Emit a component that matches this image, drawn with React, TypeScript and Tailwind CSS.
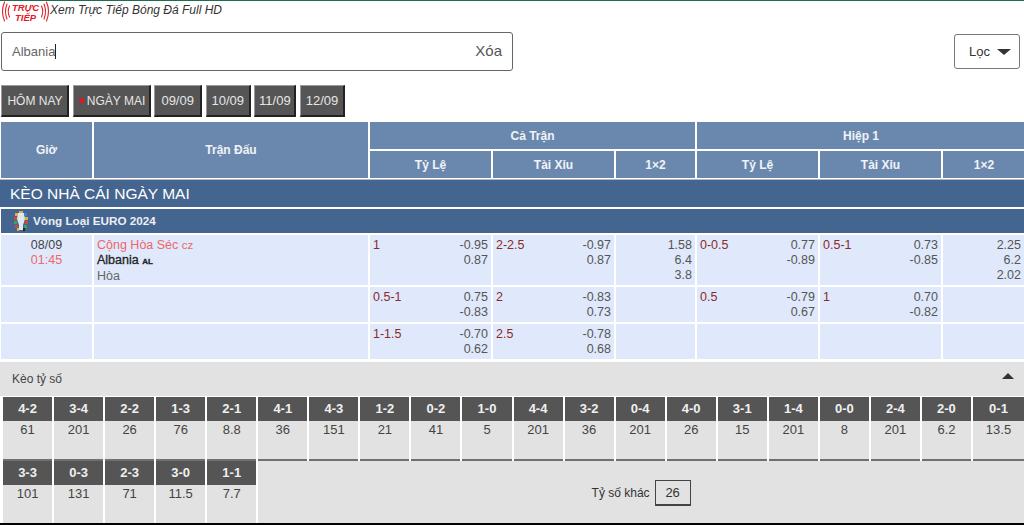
import React from "react";

const font = "font-['Liberation_Sans',Arial,sans-serif]";

const days = [
  { t: "09/09", w: "w-[48px]" },
  { t: "10/09", w: "w-[45px]" },
  { t: "11/09", w: "w-[42px]" },
  { t: "12/09", w: "w-[45px]" },
];

const oddsRows = [
  {
    time: ["08/09", "01:45"],
    h: "h-[50px]",
    cells: [
      { k: "1", v: ["-0.95", "0.87"] },
      { k: "2-2.5", v: ["-0.97", "0.87"] },
      { v: ["1.58", "6.4", "3.8"] },
      { k: "0-0.5", v: ["0.77", "-0.89"] },
      { k: "0.5-1", v: ["0.73", "-0.85"] },
      { v: ["2.25", "6.2", "2.02"] },
    ],
  },
  {
    h: "h-[35px]",
    cells: [
      { k: "0.5-1", v: ["0.75", "-0.83"] },
      { k: "2", v: ["-0.83", "0.73"] },
      { v: [] },
      { k: "0.5", v: ["-0.79", "0.67"] },
      { k: "1", v: ["0.70", "-0.82"] },
      { v: [] },
    ],
  },
  {
    h: "h-[35px]",
    cells: [
      { k: "1-1.5", v: ["-0.70", "0.62"] },
      { k: "2.5", v: ["-0.78", "0.68"] },
      { v: [] },
      { v: [] },
      { v: [] },
      { v: [] },
    ],
  },
];

const scores = [
  ["4-2", "61"], ["3-4", "201"], ["2-2", "26"], ["1-3", "76"], ["2-1", "8.8"],
  ["4-1", "36"], ["4-3", "151"], ["1-2", "21"], ["0-2", "41"], ["1-0", "5"],
  ["4-4", "201"], ["3-2", "36"], ["0-4", "201"], ["4-0", "26"], ["3-1", "15"],
  ["1-4", "201"], ["0-0", "8"], ["2-4", "201"], ["2-0", "6.2"], ["0-1", "13.5"],
];
const scores2 = [["3-3", "101"], ["0-3", "131"], ["2-3", "71"], ["3-0", "11.5"], ["1-1", "7.7"]];

const cols = "grid grid-cols-[91px_274px_121px_121px_79px_121px_121px_82px] gap-x-[2px] pl-[1px]";

function Logo() {
  return (
    <div className="relative w-[49px] h-[21px] shrink-0">
      <svg width="49" height="21" viewBox="0 0 49 21" className="absolute left-0 top-0" fill="none" stroke="#e3202a" strokeWidth="1.1" strokeLinecap="round">
        <path d="M3.5 1 Q-0.5 10.5 3.5 20" />
        <path d="M6 3 Q3 10.5 6 18" />
        <path d="M8.5 5 Q6 10.5 8.5 16" />
        <path d="M40.5 5 Q43 10.5 40.5 16" />
        <path d="M43 3 Q46 10.5 43 18" />
        <path d="M45.5 1 Q49.5 10.5 45.5 20" />
      </svg>
      <div className="absolute left-[9px] right-[9px] top-[2px] text-center text-[#e3202a] font-bold italic text-[9.5px] leading-[10px]">
        <div>TRỰC</div>
        <div>TIẾP</div>
      </div>
    </div>
  );
}

function EuroIcon() {
  return (
    <svg width="18" height="21" viewBox="0 0 18 21" className="shrink-0">
      <path d="M6 2 H12 L13 8 L11 14 V19 H7 V14 L5 8 Z" fill="#dfe6ee" />
      <rect x="3" y="2" width="3" height="3" fill="#e0b13a" />
      <rect x="2" y="6" width="3" height="3" fill="#d8443c" />
      <rect x="2" y="10" width="3" height="3" fill="#3aa35c" />
      <rect x="3" y="14" width="3" height="3" fill="#d8443c" />
      <rect x="5" y="17" width="2" height="3" fill="#e0b13a" />
      <rect x="12" y="2" width="3" height="3" fill="#3f7fd0" />
      <rect x="13" y="6" width="3" height="3" fill="#e0b13a" />
      <rect x="13" y="10" width="3" height="3" fill="#d8443c" />
      <rect x="12" y="14" width="3" height="3" fill="#3aa35c" />
      <rect x="11" y="17" width="2" height="3" fill="#222222" />
      <rect x="7" y="0" width="4" height="2" fill="#e0b13a" />
    </svg>
  );
}

function DayButton({ w, children }: { w: string; children: React.ReactNode }) {
  return (
    <button className={`${w} h-[32px] flex items-center justify-center whitespace-nowrap bg-[#555555] text-[#e6e6e6] border-r-2 border-b-2 border-[#222222] border-t border-l border-t-[#9a9a9a] border-l-[#9a9a9a]`}>
      {children}
    </button>
  );
}

function ScoreCell({ s, v, last }: { s: string; v: string; last?: boolean }) {
  return (
    <div className={`flex flex-col h-[64px] bg-[#e2e2e2] ${last ? "" : "border-b-2 border-[#707070]"}`}>
      <div className="h-[24px] bg-[#555555] text-[#f0f0f0] font-bold text-[13px] flex items-center justify-center">{s}</div>
      <div className="text-center text-[13px] leading-[16px] mt-[1px] text-[#444444]">{v}</div>
    </div>
  );
}

export default function App() {
  return (
    <div className={`${font} w-[1024px] h-[525px] overflow-hidden bg-white text-[#444444] border-t border-[#1f6b4f]`}>
      {/* top brand */}
      <div className="flex items-center h-[20px] pl-[1px]">
        <Logo />
        <span className="italic text-[12px] text-[#333333] -mt-[2px]">Xem Trực Tiếp Bóng Đá Full HD</span>
      </div>

      {/* search + filter */}
      <div className="flex justify-between items-center pl-[1px] pr-[4px] mt-[11px]">
        <div className="w-[512px] h-[39px] border border-[#666666] rounded-[3px] flex items-center justify-between pl-[10px] pr-[10px]">
          <span className="text-[13px] text-[#666666] flex items-center">
            Albania<span className="inline-block w-[1px] h-[15px] bg-[#222222]" />
          </span>
          <span className="text-[15px] text-[#555555]">Xóa</span>
        </div>
        <div className="w-[66px] h-[35px] border border-[#777777] rounded-[3px] flex items-center pl-[14px] gap-[7px] text-[13px] text-[#333333]">
          Lọc
          <span className="w-0 h-0 border-x-[7px] border-x-transparent border-t-[6px] border-t-[#333333]" />
        </div>
      </div>

      {/* day tabs */}
      <div className="flex gap-[3.6px] pl-[1px] mt-[14px]">
        <DayButton w="w-[68px]">
          <span className="text-[12px] pl-[1px]">HÔM NAY</span>
        </DayButton>
        <DayButton w="w-[78px]">
          <span className="w-[5px] h-[5px] rounded-full bg-[#e8141c] ml-[2px] mr-[3px]" />
          <span className="text-[12px]">NGÀY MAI</span>
        </DayButton>
        {days.map((d) => (
          <DayButton key={d.t} w={d.w}>
            <span className="text-[13px]">{d.t}</span>
          </DayButton>
        ))}
      </div>

      {/* table head */}
      <div className={`${cols} mt-[5px] grid-rows-[27px_27px] gap-y-[2px] text-white/90 font-bold text-[12px]`}>
        <div className="row-span-2 bg-[#6a88ad] flex items-center justify-center">Giờ</div>
        <div className="row-span-2 bg-[#6a88ad] flex items-center justify-center">Trận Đấu</div>
        <div className="col-span-3 bg-[#6a88ad] flex items-center justify-center">Cả Trận</div>
        <div className="col-span-3 bg-[#6a88ad] flex items-center justify-center">Hiệp 1</div>
        {["Tỷ Lệ", "Tài Xỉu", "1×2", "Tỷ Lệ", "Tài Xỉu", "1×2"].map((t, i) => (
          <div key={i} className="bg-[#6a88ad] flex items-center justify-center">{t}</div>
        ))}
      </div>

      {/* section bands */}
      <div className="mt-[1px] h-[28px] bg-[#44658f] border-t border-[#bbbbbb] pl-[10px] flex items-center text-white text-[15.5px]">
        KÈO NHÀ CÁI NGÀY MAI
      </div>
      <div className="mt-[2px] ml-[1px] h-[24px] bg-[#44658f] pl-[11px] flex items-center gap-[3px] text-white/90 font-bold text-[11.7px]">
        <EuroIcon />
        Vòng Loại EURO 2024
      </div>

      {/* odds rows */}
      <div className="flex flex-col gap-y-[2px] mt-[2px]">
        {oddsRows.map((row, r) => (
          <div key={r} className={`${cols} ${row.h} text-[12.5px] leading-[15px]`}>
            <div className="bg-[#dfe9fb] text-center pt-[3px]">
              {row.time && (
                <>
                  <div>{row.time[0]}</div>
                  <div className="text-[#f0666a]">{row.time[1]}</div>
                </>
              )}
            </div>
            <div className="bg-[#dfe9fb] pl-[3px] pt-[3px]">
              {r === 0 && (
                <>
                  <div className="text-[#f0666a]">
                    Cộng Hòa Séc <span className="text-[11.5px]">cz</span>
                  </div>
                  <div className="text-[#222222] [-webkit-text-stroke:0.3px_#222222]">
                    Albania <span className="text-[8px] font-bold">AL</span>
                  </div>
                  <div className="text-[#666666]">Hòa</div>
                </>
              )}
            </div>
            {row.cells.map((c, i) => (
              <div key={i} className={`bg-[#dfe9fb] pl-[3px] pt-[3px] flex justify-between ${i === 5 ? "pr-[4px]" : "pr-[3px]"}`}>
                <span className="text-[#8b2a2a]">{c.k}</span>
                <div className="text-right text-[#555555]">
                  {c.v.map((x, j) => (
                    <div key={j}>{x}</div>
                  ))}
                </div>
              </div>
            ))}
          </div>
        ))}
      </div>

      {/* score odds */}
      <div className="mt-[3px] h-[163px] bg-[#e2e2e2] border-b-2 border-black overflow-hidden">
        <div className="h-[34px] flex items-center justify-between pl-[12px] pr-[10px] text-[12px] text-[#444444]">
          Kèo tỷ số
          <span className="w-0 h-0 border-x-[6px] border-x-transparent border-b-[6px] border-b-[#333333] mb-[6px]" />
        </div>
        <div className="grid grid-cols-[repeat(19,1fr)_51px] gap-x-[2px] pl-[3px] bg-white pt-[1px]">
          {scores.map(([s, v]) => (
            <ScoreCell key={s} s={s} v={v} />
          ))}
          {scores2.map(([s, v]) => (
            <ScoreCell key={s} s={s} v={v} last />
          ))}
          <div className="col-span-15 h-[64px] bg-[#e2e2e2] flex items-center justify-center gap-[5px] text-[12px] text-[#333333]">
            Tỷ số khác
            <span className="w-[36px] h-[26px] border border-[#444444] border-b-2 flex items-center justify-center text-[13px]">26</span>
          </div>
        </div>
      </div>
    </div>
  );
}
